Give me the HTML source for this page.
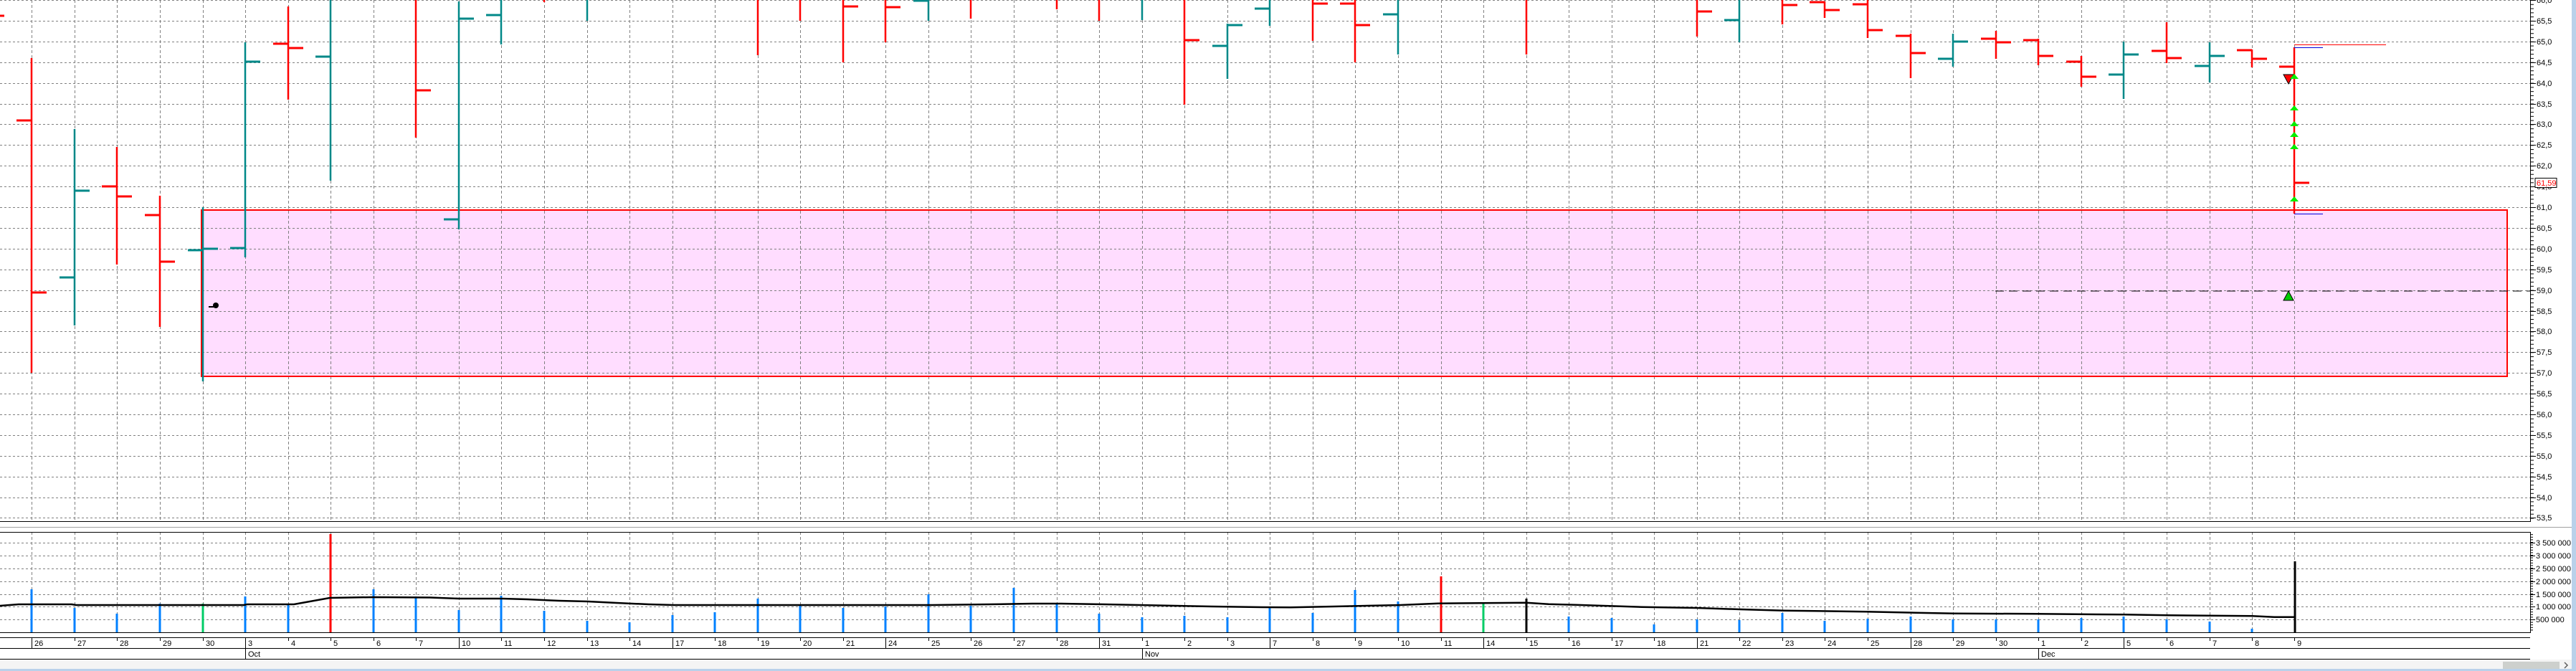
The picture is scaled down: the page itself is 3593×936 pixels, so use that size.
<!DOCTYPE html>
<html><head><meta charset="utf-8">
<style>
html,body{margin:0;padding:0;background:#fff;}
body{width:3593px;height:936px;overflow:hidden;position:relative;}
svg{position:absolute;left:0;top:0;}
text{font-family:"Liberation Sans",sans-serif;font-size:11px;fill:#000;}
</style></head>
<body>
<svg width="3593" height="936" viewBox="0 0 3593 936" xmlns="http://www.w3.org/2000/svg">
<defs>
<pattern id="pt" patternUnits="userSpaceOnUse" width="10" height="5.78"><rect x="0" y="0" width="4" height="1" fill="#000"/></pattern>
<pattern id="vt" patternUnits="userSpaceOnUse" width="10" height="3.6" patternTransform="translate(0,882)"><rect x="0" y="0" width="3" height="1" fill="#000"/></pattern>
</defs>
<rect x="0" y="0" width="3593" height="936" fill="#fff"/>
<!-- pink zone -->
<rect x="281" y="293" width="3216" height="232" fill="#ffddff"/>
<!-- price grid horizontal -->
<path stroke="#808080" stroke-width="1" stroke-dasharray="3 3" fill="none" shape-rendering="crispEdges" d="M0 0.5H3529M0 29.5H3529M0 58.5H3529M0 87.5H3529M0 116.5H3529M0 145.5H3529M0 173.5H3529M0 202.5H3529M0 231.5H3529M0 260.5H3529M0 289.5H3529M0 318.5H3529M0 347.5H3529M0 376.5H3529M0 405.5H3529M0 434.5H3529M0 462.5H3529M0 491.5H3529M0 520.5H3529M0 549.5H3529M0 578.5H3529M0 607.5H3529M0 636.5H3529M0 665.5H3529M0 694.5H3529M0 722.5H3529"/>
<!-- price grid vertical -->
<path stroke="#808080" stroke-width="1" stroke-dasharray="4 3" fill="none" shape-rendering="crispEdges" d="M44.5 0V727M104.5 0V727M163.5 0V727M223.5 0V727M283.5 0V727M342.5 0V727M402.5 0V727M461.5 0V727M521.5 0V727M580.5 0V727M640.5 0V727M699.5 0V727M759.5 0V727M819.5 0V727M878.5 0V727M938.5 0V727M997.5 0V727M1057.5 0V727M1116.5 0V727M1176.5 0V727M1235.5 0V727M1295.5 0V727M1354.5 0V727M1414.5 0V727M1474.5 0V727M1533.5 0V727M1593.5 0V727M1652.5 0V727M1712.5 0V727M1771.5 0V727M1831.5 0V727M1890.5 0V727M1950.5 0V727M2010.5 0V727M2069.5 0V727M2129.5 0V727M2188.5 0V727M2248.5 0V727M2307.5 0V727M2367.5 0V727M2426.5 0V727M2486.5 0V727M2545.5 0V727M2605.5 0V727M2665.5 0V727M2724.5 0V727M2784.5 0V727M2843.5 0V727M2903.5 0V727M2962.5 0V727M3022.5 0V727M3082.5 0V727M3141.5 0V727M3200.5 0V727"/>
<!-- pink zone border -->
<rect x="281" y="293" width="3216" height="232" fill="none" stroke="#ff0000" stroke-width="2"/>
<!-- dashed black level -->
<path d="M2783 406H3529" stroke="#000" stroke-width="1" stroke-dasharray="12 7" fill="none"/>
<!-- OHLC red -->
<g stroke="#ff0000" fill="none">
<path stroke-width="2.5" d="M44 81V520M163 205V369M223 273V456M402 9V139M580 0V192M759 0V3M1057 0V77M1116 0V29M1176 0V87M1235 0V59M1354 0V26M1474 0V13M1533 0V29M1652 0V146M1831 0V57M1890 0V87M2129 0V76M2367 0V51M2486 0V34M2545 2V25M2605 0V53M2665 47V109M2784 43V82M2843 54V91M2903 78V121M3022 31V88M3141 69V94M3200 66V298"/>
<path stroke-width="3" d="M23 168H44M44 408H65M142 260H163M163 274H184M202 300H223M223 365H244M381 61H402M402 67H423M580 126H601M1176 9H1197M1235 10H1256M1652 56H1673M1831 5H1852M1869 5H1890M1890 35H1911M2367 16H2388M2486 7H2507M2524 3H2545M2545 14H2566M2584 6H2605M2605 42H2626M2644 50H2665M2665 74H2686M2763 54H2784M2784 59H2805M2822 56H2843M2843 78H2864M2882 86H2903M2903 107H2924M3001 71H3022M3022 81H3043M3120 70H3141M3141 82H3162M3179 93H3200M3200 255H3221M0 22H6"/>
</g>
<!-- OHLC teal -->
<g stroke="#008888" fill="none">
<path stroke-width="2.5" d="M104 180V454M283 289V532M342 59V359M461 0V252M640 2V320M699 0V62M819 0V29M1295 0V29M1593 0V28M1712 33V110M1771 0V36M1950 0V76M2426 0V59M2724 47V93M2962 58V138M3082 59V115"/>
<path stroke-width="3" d="M83 387H104M104 266H125M262 349H283M283 347H304M321 346H342M342 86H363M440 79H461M619 306H640M640 26H661M678 21H699M1274 1H1295M1691 64H1712M1712 35H1733M1750 12H1771M1929 20H1950M2405 28H2426M2703 82H2724M2724 58H2745M2941 104H2962M2962 76H2983M3061 92H3082M3082 78H3103"/>
</g>
<!-- last bar lines -->
<path d="M3200 62.5H3328" stroke="#ff0000" stroke-width="1"/>
<path d="M3200 66.5H3240M3200 298.5H3240" stroke="#0000dd" stroke-width="1"/>
<!-- markers -->
<polygon points="3185,104 3199,104 3192,117" fill="#ff0000" stroke="#000" stroke-width="1"/>
<g fill="#00ee00">
<polygon points="3194,110 3206,110 3200,103"/>
<polygon points="3194,154 3206,154 3200,147"/>
<polygon points="3194,176 3206,176 3200,169"/>
<polygon points="3194,191 3206,191 3200,184"/>
<polygon points="3194,208 3206,208 3200,201"/>
<polygon points="3194,281 3206,281 3200,274"/>
</g>
<polygon points="3185,419 3199,419 3192,406" fill="#00cc00" stroke="#000" stroke-width="1"/>
<!-- cursor blob -->
<circle cx="301" cy="426" r="4" fill="#000"/>
<rect x="291" y="427" width="8" height="2" fill="#000"/>
<!-- price panel borders -->
<path d="M0 727.5H3529.5V0" stroke="#000" stroke-width="1" fill="none"/>
<rect x="3530" y="0" width="4" height="727" fill="url(#pt)"/>
<path stroke="#000" stroke-width="1" d="M3530 0.5h7M3530 29.5h7M3530 58.5h7M3530 87.5h7M3530 116.5h7M3530 145.5h7M3530 173.5h7M3530 202.5h7M3530 231.5h7M3530 260.5h7M3530 289.5h7M3530 318.5h7M3530 347.5h7M3530 376.5h7M3530 405.5h7M3530 434.5h7M3530 462.5h7M3530 491.5h7M3530 520.5h7M3530 549.5h7M3530 578.5h7M3530 607.5h7M3530 636.5h7M3530 665.5h7M3530 694.5h7M3530 722.5h7"/>
<g>
<text x="3538" y="4">66,0</text><text x="3538" y="33">65,5</text><text x="3538" y="62">65,0</text><text x="3538" y="91">64,5</text><text x="3538" y="120">64,0</text><text x="3538" y="149">63,5</text><text x="3538" y="177">63,0</text><text x="3538" y="206">62,5</text><text x="3538" y="235">62,0</text><text x="3538" y="264">61,5</text><text x="3538" y="293">61,0</text><text x="3538" y="322">60,5</text><text x="3538" y="351">60,0</text><text x="3538" y="380">59,5</text><text x="3538" y="409">59,0</text><text x="3538" y="438">58,5</text><text x="3538" y="466">58,0</text><text x="3538" y="495">57,5</text><text x="3538" y="524">57,0</text><text x="3538" y="553">56,5</text><text x="3538" y="582">56,0</text><text x="3538" y="611">55,5</text><text x="3538" y="640">55,0</text><text x="3538" y="669">54,5</text><text x="3538" y="698">54,0</text><text x="3538" y="726">53,5</text>
</g>
<rect x="3536" y="248.5" width="30" height="13" fill="#fff" stroke="#000" stroke-width="1"/>
<text x="3538" y="259" style="fill:#ff0000">61,59</text>
<!-- separator -->
<path d="M0 735.5H3587" stroke="#a0a0a0" stroke-width="1"/>
<!-- volume grid -->
<path stroke="#808080" stroke-width="1" stroke-dasharray="3 3" fill="none" shape-rendering="crispEdges" d="M0 757.5H3529M0 775.5H3529M0 793.5H3529M0 811.5H3529M0 829.5H3529M0 846.5H3529M0 864.5H3529"/>
<path stroke="#808080" stroke-width="1" stroke-dasharray="4 3" fill="none" shape-rendering="crispEdges" d="M44.5 742V882M104.5 742V882M163.5 742V882M223.5 742V882M283.5 742V882M342.5 742V882M402.5 742V882M461.5 742V882M521.5 742V882M580.5 742V882M640.5 742V882M699.5 742V882M759.5 742V882M819.5 742V882M878.5 742V882M938.5 742V882M997.5 742V882M1057.5 742V882M1116.5 742V882M1176.5 742V882M1235.5 742V882M1295.5 742V882M1354.5 742V882M1414.5 742V882M1474.5 742V882M1533.5 742V882M1593.5 742V882M1652.5 742V882M1712.5 742V882M1771.5 742V882M1831.5 742V882M1890.5 742V882M1950.5 742V882M2010.5 742V882M2069.5 742V882M2129.5 742V882M2188.5 742V882M2248.5 742V882M2307.5 742V882M2367.5 742V882M2426.5 742V882M2486.5 742V882M2545.5 742V882M2605.5 742V882M2665.5 742V882M2724.5 742V882M2784.5 742V882M2843.5 742V882M2903.5 742V882M2962.5 742V882M3022.5 742V882M3082.5 742V882M3141.5 742V882M3200.5 742V882"/>
<!-- volume bars -->
<path stroke="#0080ff" stroke-width="3" fill="none" d="M44 822V882M104 848V882M163 856V882M223 842V882M342 832V882M402 844V882M521 822V882M580 832V882M640 851V882M699 831V882M759 852V882M819 866V882M878 868V882M938 858V882M997 854V882M1057 835V882M1116 844V882M1176 848V882M1235 846V882M1295 829V882M1354 845V882M1414 820V882M1474 842V882M1533 856V882M1593 861V882M1652 859V882M1712 861V882M1771 846V882M1831 855V882M1890 823V882M1950 839V882M2188 860V882M2248 862V882M2307 871V882M2367 864V882M2426 865V882M2486 855V882M2545 866V882M2605 863V882M2665 860V882M2724 864V882M2784 864V882M2843 864V882M2903 862V882M2962 860V882M3022 864V882M3082 867V882M3141 877V882"/>
<path stroke="#00cc66" stroke-width="3" d="M283 842V882M2069 840V882"/>
<path stroke="#ff0000" stroke-width="3" d="M461 745V882M2010 804V882"/>
<path stroke="#000" stroke-width="3" d="M2129 835V882M3201 783V882"/>
<!-- volume MA -->
<polyline fill="none" stroke="#000" stroke-width="2.5" points="0,845 26,843 100,843 106,844 340,844 345,843 410,843 460,834 520,833 600,833.5 640,835 700,835 735,836 780,838 820,839 860,841 905,843 940,844 1300,844 1380,843 1440,842 1480,842 1540,843 1590,844 1640,845 1690,846 1760,847 1800,847.3 1861,846 1953,844 2006,841.7 2129,840.7 2160,842.7 2198,843.7 2290,846.7 2366,848 2427,850 2489,851.7 2603,853.3 2672,854.7 2726,855.7 2840,856.3 2963,857.3 3024,858.3 3141,859.3 3172,860.7 3200,860.7"/>
<!-- volume panel border -->
<path d="M0 742.5H3529.5V882.5H0" stroke="#000" stroke-width="1" fill="none"/>
<rect x="3530" y="745" width="3" height="137" fill="url(#vt)"/>
<path stroke="#000" stroke-width="1" d="M3530 757.5h6M3530 775.5h6M3530 793.5h6M3530 811.5h6M3530 829.5h6M3530 846.5h6M3530 864.5h6"/>
<g>
<text x="3537" y="761">3 500 000</text><text x="3537" y="779">3 000 000</text><text x="3537" y="797">2 500 000</text><text x="3537" y="815">2 000 000</text><text x="3537" y="833">1 500 000</text><text x="3537" y="850">1 000 000</text><text x="3537" y="868">500 000</text>
</g>
<!-- date axis -->
<path d="M0 889.5H3529M0 904.5H3529M0 919.5H3529" stroke="#000" stroke-width="1"/>
<path stroke="#000" stroke-width="1" d="M44.5 889V904M342.5 889V919M640.5 889V904M938.5 889V904M1235.5 889V904M1533.5 889V904M1593.5 904V919M1771.5 889V904M2069.5 889V904M2367.5 889V904M2665.5 889V904M2843.5 904V919M2962.5 889V904M104.5 889V894M163.5 889V894M223.5 889V894M283.5 889V894M402.5 889V894M461.5 889V894M521.5 889V894M580.5 889V894M699.5 889V894M759.5 889V894M819.5 889V894M878.5 889V894M997.5 889V894M1057.5 889V894M1116.5 889V894M1176.5 889V894M1295.5 889V894M1354.5 889V894M1414.5 889V894M1474.5 889V894M1593.5 889V894M1652.5 889V894M1712.5 889V894M1831.5 889V894M1890.5 889V894M1950.5 889V894M2010.5 889V894M2129.5 889V894M2188.5 889V894M2248.5 889V894M2307.5 889V894M2426.5 889V894M2486.5 889V894M2545.5 889V894M2605.5 889V894M2724.5 889V894M2784.5 889V894M2843.5 889V894M2903.5 889V894M3022.5 889V894M3082.5 889V894M3141.5 889V894M3200.5 889V894"/>
<g>
<text x="48" y="901">26</text><text x="108" y="901">27</text><text x="167" y="901">28</text><text x="227" y="901">29</text><text x="287" y="901">30</text><text x="346" y="901">3</text><text x="406" y="901">4</text><text x="465" y="901">5</text><text x="525" y="901">6</text><text x="584" y="901">7</text><text x="644" y="901">10</text><text x="703" y="901">11</text><text x="763" y="901">12</text><text x="823" y="901">13</text><text x="882" y="901">14</text><text x="942" y="901">17</text><text x="1001" y="901">18</text><text x="1061" y="901">19</text><text x="1120" y="901">20</text><text x="1180" y="901">21</text><text x="1239" y="901">24</text><text x="1299" y="901">25</text><text x="1358" y="901">26</text><text x="1418" y="901">27</text><text x="1478" y="901">28</text><text x="1537" y="901">31</text><text x="1597" y="901">1</text><text x="1656" y="901">2</text><text x="1716" y="901">3</text><text x="1775" y="901">7</text><text x="1835" y="901">8</text><text x="1894" y="901">9</text><text x="1954" y="901">10</text><text x="2014" y="901">11</text><text x="2073" y="901">14</text><text x="2133" y="901">15</text><text x="2192" y="901">16</text><text x="2252" y="901">17</text><text x="2311" y="901">18</text><text x="2371" y="901">21</text><text x="2430" y="901">22</text><text x="2490" y="901">23</text><text x="2549" y="901">24</text><text x="2609" y="901">25</text><text x="2669" y="901">28</text><text x="2728" y="901">29</text><text x="2788" y="901">30</text><text x="2847" y="901">1</text><text x="2907" y="901">2</text><text x="2966" y="901">5</text><text x="3026" y="901">6</text><text x="3086" y="901">7</text><text x="3145" y="901">8</text><text x="3204" y="901">9</text>
<text x="346" y="916">Oct</text><text x="1597" y="916">Nov</text><text x="2847" y="916">Dec</text>
</g>
<!-- bottom scrollbar & frame -->
<rect x="0" y="920" width="3587" height="13" fill="#f4f4f4"/>
<rect x="3491" y="923" width="79" height="10" fill="#cdd0cd"/>
<path d="M3577 924L3581 928L3577 932" stroke="#606060" stroke-width="1.5" fill="none"/>
<rect x="0" y="933" width="3593" height="3" fill="#b9d1ea"/>
<rect x="3587" y="0" width="6" height="936" fill="#b9d1ea"/>
</svg>
</body></html>
